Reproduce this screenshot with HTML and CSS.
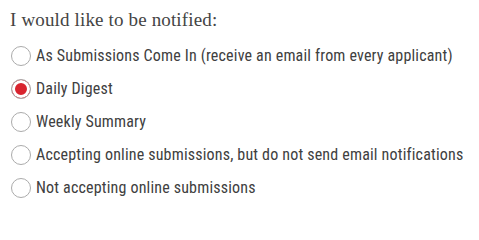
FILE: index.html
```html
<!DOCTYPE html>
<html lang="en">
<head>
<meta charset="utf-8">
<title>Notifications</title>
<link rel="stylesheet" href="styles.css">
</head>
<body>
<form class="notify">
  <h2 class="notify-title">I would like to be notified:</h2>
  <div class="options">
    <label class="option"><input type="radio" name="notify" class="radio"><span class="option-text">As Submissions Come In (receive an email from every applicant)</span></label>
    <label class="option"><input type="radio" name="notify" class="radio" checked><span class="option-text">Daily Digest</span></label>
    <label class="option"><input type="radio" name="notify" class="radio"><span class="option-text">Weekly Summary</span></label>
    <label class="option"><input type="radio" name="notify" class="radio"><span class="option-text">Accepting online submissions, but do not send email notifications</span></label>
    <label class="option"><input type="radio" name="notify" class="radio"><span class="option-text">Not accepting online submissions</span></label>
  </div>
</form>
</body>
</html>
```
FILE: styles.css
```css
html, body {
  margin: 0;
  padding: 0;
  background: #ffffff;
}

.notify {
  margin: 0;
  padding: 8px 0 0 0;
}

.notify-title {
  margin: 0;
  padding-left: 10px;
  font-family: "Liberation Serif", "Times New Roman", serif;
  font-weight: normal;
  font-size: 19px;
  letter-spacing: 0.15px;
  line-height: 24px;
  color: #444444;
}

.options {
  margin-top: 7px;
  display: flex;
  flex-direction: column;
}

.option {
  display: flex;
  align-items: center;
  gap: 5px;
  height: 33px;
  padding-left: 11px;
  font-family: "Roboto Condensed", "DejaVu Sans Condensed", sans-serif;
  font-size: 16px;
  letter-spacing: 0.18px;
  color: #404040;
  white-space: nowrap;
}

.radio {
  appearance: none;
  -webkit-appearance: none;
  margin: 0;
  flex: none;
  width: 20px;
  height: 20px;
  border: 1px solid #ababab;
  border-radius: 50%;
  background: #ffffff;
  box-sizing: border-box;
}

.radio:checked {
  background: #d9232e;
  box-shadow: inset 0 0 0 3px #ffffff;
}
```
